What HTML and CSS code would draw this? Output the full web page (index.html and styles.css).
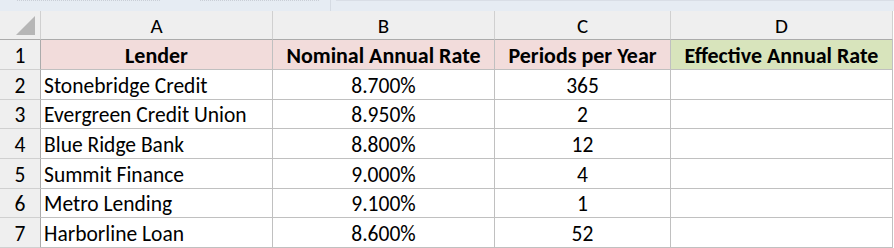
FILE: index.html
```html
<!DOCTYPE html>
<html>
<head>
<meta charset="utf-8">
<link rel="stylesheet" href="styles.css">
</head>
<body>
<div class="topbar">
  <span class="dots dots-a"></span>
  <span class="dots dots-b"></span>
  <span class="divider"></span>
  <span class="line-c"></span>
</div>
<div class="sheet">
  <div class="corner"><span class="tri"></span></div>
  <div class="colhead">A</div>
  <div class="colhead">B</div>
  <div class="colhead">C</div>
  <div class="colhead">D</div>

  <div class="rownum">1</div>
  <div class="cell hdr pink">Lender</div>
  <div class="cell hdr pink">Nominal Annual Rate</div>
  <div class="cell hdr pink">Periods per Year</div>
  <div class="cell hdr green">Effective Annual Rate</div>

  <div class="rownum">2</div>
  <div class="cell left">Stonebridge Credit</div>
  <div class="cell">8.700%</div>
  <div class="cell">365</div>
  <div class="cell"></div>

  <div class="rownum">3</div>
  <div class="cell left">Evergreen Credit Union</div>
  <div class="cell">8.950%</div>
  <div class="cell">2</div>
  <div class="cell"></div>

  <div class="rownum">4</div>
  <div class="cell left">Blue Ridge Bank</div>
  <div class="cell">8.800%</div>
  <div class="cell">12</div>
  <div class="cell"></div>

  <div class="rownum">5</div>
  <div class="cell left">Summit Finance</div>
  <div class="cell">9.000%</div>
  <div class="cell">4</div>
  <div class="cell"></div>

  <div class="rownum">6</div>
  <div class="cell left">Metro Lending</div>
  <div class="cell">9.100%</div>
  <div class="cell">1</div>
  <div class="cell"></div>

  <div class="rownum">7</div>
  <div class="cell left">Harborline Loan</div>
  <div class="cell">8.600%</div>
  <div class="cell">52</div>
  <div class="cell"></div>
</div>
</body>
</html>
```

FILE: styles.css
```css
* { box-sizing: border-box; }
html, body { margin: 0; padding: 0; background: #ffffff; }
body {
  width: 894px;
  height: 248px;
  overflow: hidden;
  font-family: Carlito, Calibri, Lato, "Liberation Sans", sans-serif;
  font-size: 21.5px;
  color: #000000;
}
.topbar {
  position: relative;
  height: 11px;
  background: #e6ecf3;
}
.dots {
  position: absolute;
  top: 0;
  height: 1px;
  border-top: 1px dotted #c9ced6;
}
.dots-a { left: 17px; width: 143px; }
.dots-b { left: 200px; width: 119px; }
.divider {
  position: absolute;
  left: 330px;
  top: 0;
  width: 1px;
  height: 11px;
  background: #d5dbe3;
}
.line-c {
  position: absolute;
  left: 336px;
  right: 0;
  top: 0;
  height: 1px;
  background: #d9dee6;
}
.sheet {
  display: grid;
  grid-template-columns: 41px 232px 222px 176px 222px;
  grid-template-rows: 29px 30px 30px 29px 30px 30px 29px 30px;
}
.corner {
  position: relative;
  background: #efefef;
  border-right: 1px solid #d0d0d0;
  border-bottom: 1px solid #ababab;
}
.tri {
  position: absolute;
  left: 16px;
  top: 5px;
  width: 0;
  height: 0;
  border-left: 19px solid transparent;
  border-bottom: 19px solid #b6b6b6;
}
.colhead {
  display: flex;
  align-items: center;
  justify-content: center;
  background: #efefef;
  border-right: 1px solid #d0d0d0;
  border-bottom: 1px solid #ababab;
  padding-top: 1px;
  font-size: 21px;
}
.rownum {
  display: flex;
  align-items: center;
  justify-content: center;
  background: #efefef;
  border-right: 1px solid #ababab;
  border-bottom: 1px solid #d0d0d0;
  padding-top: 2px;
}
.cell {
  display: flex;
  align-items: center;
  justify-content: center;
  border-right: 1px solid #c0c0c0;
  border-bottom: 1px solid #c0c0c0;
  white-space: nowrap;
  padding-top: 2px;
}
.left { justify-content: flex-start; padding-left: 3px; }
.hdr { font-weight: bold; font-size: 22px; }
.pink { background: #f2dcdb; }
.green { background: #d8e4bc; }
```
